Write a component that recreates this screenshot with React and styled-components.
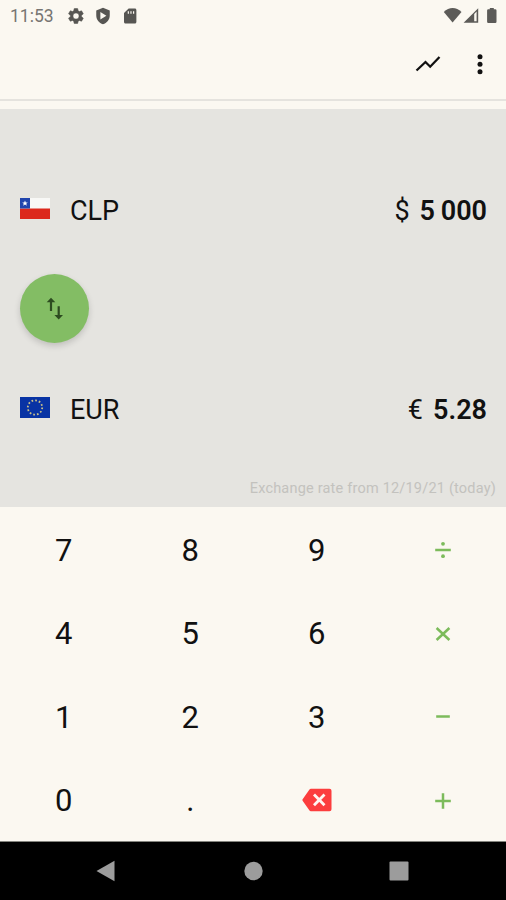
import styled, { createGlobalStyle } from 'styled-components';

const keys = ['7', '8', '9', 'divide', '4', '5', '6', 'multiply', '1', '2', '3', 'minus', '0', '.', 'delete', 'plus'];

const operators = {
    divide: <><path d="M4.2 12h15.600" /><circle cx="12" cy="5.800" r="1.900" /><circle cx="12" cy="18.200" r="1.900" /></>,
    multiply: <path d="M5.600 6l12.800 12M18.400 6l-12.800 12" />,
    minus: <path d="M5.200 11.500h13.600" />,
    plus: <path d="M4.200 12h15.600M12 4.200v15.600" />,
};

const StatusIcons = () => (
    <StatusGroup>
        <svg width="18" height="18" viewBox="0 0 24 24" fill="#575653" stroke="#575653" strokeWidth=".7">
            <path fillRule="evenodd" d="M19.4 13a7.500 7.500 0 0 0 0-2l2.100-1.600a.5.5 0 0 0 .1-.6l-2-3.500a.5.5 0 0 0-.6-.2l-2.500 1a7.300 7.300 0 0 0-1.700-1l-.4-2.600a.5.5 0 0 0-.5-.5h-4a.5.5 0 0 0-.5.5L9 5.100a7.300 7.300 0 0 0-1.700 1l-2.500-1a.5.5 0 0 0-.6.2l-2 3.500a.5.5 0 0 0 .1.6L4.500 11a7.500 7.500 0 0 0 0 2l-2.200 1.600a.5.5 0 0 0-.1.6l2 3.500c.1.2.4.3.6.2l2.500-1a7.300 7.300 0 0 0 1.700 1l.4 2.600c0 .3.2.5.5.5h4c.3 0 .5-.2.5-.5l.4-2.600a7.300 7.300 0 0 0 1.700-1l2.500 1c.2.1.5 0 .6-.2l2-3.500a.5.5 0 0 0-.1-.6zM12 7.900a4.100 4.100 0 1 1 0 8.200 4.100 4.100 0 0 1 0-8.200z" />
        </svg>
        <svg width="18" height="18" viewBox="0 0 24 24" fill="#575653">
            <path fillRule="evenodd" d="M12 1L3 4.500V11c0 6 3.800 10.500 9 12 5.200-1.500 9-6 9-12V4.500zM8.500 6.500l8 5-8 5z" />
        </svg>
        <svg width="18" height="18" viewBox="0 0 24 24" fill="#575653">
            <path fillRule="evenodd" d="M18.500 2h-8.300L4 8v12c0 1.100.9 2 2 2h12.500c1.100 0 2-.9 2-2V4c0-1.100-.9-2-2-2zM9 5.500h1.600V9H9zM12.500 5.500h1.600V9h-1.600zM16 5.500h1.600V9H16z" />
        </svg>
    </StatusGroup>
);

const App = () => (
    <Screen>
        <GlobalStyle />
        <StatusBar>
            <Clock>11:53</Clock>
            <StatusIcons />
            <SignalIcons width="56" height="18" viewBox="0 0 56 18" fill="#5c5b58">
                <path d="M1.800 5C7-.3 14.300-.3 19.500 5L10.600 15.600z" />
                <path fillRule="evenodd" d="M36.200 1.200V15.800H21.600zM32.200 6.900V14.300H34.600V4.600z" />
                <path d="M47.800 2.300V1h4v1.300h1.500a1.200 1.200 0 0 1 1.200 1.200v11.300a1.200 1.200 0 0 1-1.200 1.200h-7a1.200 1.200 0 0 1-1.200-1.200V3.500a1.200 1.200 0 0 1 1.200-1.200z" />
            </SignalIcons>
        </StatusBar>
        <Toolbar>
            <svg width="28" height="20" viewBox="0 0 28 20" fill="none" stroke="#111" strokeWidth="2.300">
                <path d="M2.500 16.500l9-8.500 4.700 4.700L25.500 3" />
            </svg>
            <svg width="8" height="24" viewBox="0 0 8 24" fill="#111">
                <circle cx="4" cy="4.800" r="2.500" /><circle cx="4" cy="12.300" r="2.500" /><circle cx="4" cy="19.800" r="2.500" />
            </svg>
        </Toolbar>
        <Converter>
            <CurrencyRow>
                <svg width="30" height="21" viewBox="0 0 30 21">
                    <path fill="#f8f8f6" d="M0 0h30v11H0z" />
                    <path fill="#dc281c" d="M0 10.500h30V21H0z" />
                    <path fill="#2145ad" d="M0 0h10v10.500H0z" />
                    <path fill="#fff" d="M5 2.400l.8 2h2L6.200 5.700l.7 2.100L5 6.500 3.100 7.800l.7-2.100-1.600-1.300h2z" />
                </svg>
                <Code>CLP</Code>
                <Sign>$</Sign>
                <Amount>5 000</Amount>
            </CurrencyRow>
            <SwapButton>
                <svg width="20" height="26" viewBox="0 0 20 26" fill="#2d4b20">
                    <path d="M6 1.800l4.300 4.500H7.100V15H4.900V6.300H1.700zM13.700 23.400l4.300-4.500h-3.200V10.300h-2.200v8.600H9.400z" />
                </svg>
            </SwapButton>
            <CurrencyRow>
                <svg width="30" height="21" viewBox="0 0 30 21">
                    <path fill="#0833a4" d="M0 0h30v21H0z" />
                    <circle cx="15" cy="10.500" r="7.200" fill="none" stroke="#c9c08a" strokeWidth="1.800" strokeDasharray="1.700 2.070" />
                </svg>
                <Code>EUR</Code>
                <Sign>€</Sign>
                <Amount>5.28</Amount>
            </CurrencyRow>
            <RateInfo>Exchange rate from 12/19/21 (today)</RateInfo>
        </Converter>
        <Keypad>
            {keys.map(key => (
                <Key key={key}>
                    {key === 'delete' && (
                        <DeleteIcon width="30" height="24" viewBox="0 0 30 24">
                            <path fill="#fc3d3e" d="M9 .8h18.500A2 2 0 0 1 29.500 2.800v18.400a2 2 0 0 1-2 2H9a2 2 0 0 1-1.700-.9L.8 13a1.600 1.600 0 0 1 0-2l6.500-9.300A2 2 0 0 1 9 .8z" />
                            <path stroke="#fff5f0" strokeWidth="2.800" d="M12 6.500l10.500 10.800M22.500 6.500L12 17.300" />
                        </DeleteIcon>
                    )}
                    {operators[key] && <OperatorIcon viewBox="0 0 24 24">{operators[key]}</OperatorIcon>}
                    {key.length === 1 && key}
                </Key>
            ))}
        </Keypad>
        <NavBar>
            <svg width="22" height="22" viewBox="0 0 22 22"><path d="M1.500 11L19.500.800v20.400z" /></svg>
            <svg width="22" height="22" viewBox="0 0 22 22"><circle cx="11.500" cy="11" r="9.200" /></svg>
            <svg width="22" height="22" viewBox="0 0 22 22"><rect x="1.500" y="1.500" width="19" height="19" rx="1" /></svg>
        </NavBar>
    </Screen>
);

export default App;

const GlobalStyle = createGlobalStyle`
    body {
        margin: 0;
    }
`;

const Screen = styled.div`
    display: flex;
    flex-direction: column;
    width: 506px;
    height: 900px;
    overflow: hidden;
    background: #fbf8f1;
    color: #111;
    font-family: Roboto, sans-serif;
`;

const StatusBar = styled.div`
    display: flex;
    align-items: center;
    height: 32px;
    padding: 0 8px 0 10px;
    box-sizing: border-box;
`;

const Clock = styled.div`
    width: 57px;
    font-size: 17.5px;
    color: #777572;
`;

const StatusGroup = styled.div`
    display: flex;
    gap: 9px;
`;

const SignalIcons = styled.svg`
    margin-left: auto;
`;

const Toolbar = styled.div`
    display: flex;
    align-items: center;
    justify-content: flex-end;
    gap: 34px;
    height: 69px;
    padding-right: 22px;
    padding-bottom: 4px;
    box-sizing: border-box;
    border-bottom: 2px solid #e5e3de;
`;

const Converter = styled.div`
    display: flex;
    flex-direction: column;
    height: 398px;
    margin-top: 8px;
    padding: 82px 19px 0 20px;
    box-sizing: border-box;
    background: #e5e4e0;
`;

const CurrencyRow = styled.div`
    display: flex;
    align-items: center;
    height: 40px;
    font-size: 27px;

    svg {
        margin-bottom: 5px;
    }
`;

const Code = styled.div`
    margin-left: 20px;
`;

const Sign = styled.div`
    margin-left: auto;
`;

const Amount = styled.div`
    margin-left: 10px;
    font-weight: 600;
    word-spacing: -1px;
`;

const SwapButton = styled.button`
    display: flex;
    align-items: center;
    justify-content: center;
    width: 69px;
    height: 69px;
    margin: 43px 0 47px;
    padding: 0;
    border: 0;
    border-radius: 50%;
    background: #83bd64;
    box-shadow: 0 3px 6px rgba(0, 0, 0, 0.16);
`;

const RateInfo = styled.div`
    margin: 49px -9px 0 0;
    font-size: 14.5px;
    line-height: 20px;
    letter-spacing: 0.2px;
    text-align: right;
    color: #c3c2be;
`;

const Keypad = styled.div`
    display: grid;
    grid-template-columns: repeat(4, 1fr);
    grid-template-rows: repeat(4, 83.5px);
    height: 334px;
    padding-top: 1.5px;
    box-sizing: border-box;
`;

const Key = styled.div`
    display: flex;
    align-items: center;
    justify-content: center;
    padding-left: 1px;
    font-size: 31px;
`;

const DeleteIcon = styled.svg`
    margin: 0 0 2px 1px;
`;

const OperatorIcon = styled.svg`
    width: 24px;
    height: 24px;
    fill: none;
    stroke: #7cbb5b;
    stroke-width: 2.5;

    circle {
        fill: #7cbb5b;
        stroke: none;
    }
`;

const NavBar = styled.div`
    display: flex;
    align-items: center;
    justify-content: space-between;
    flex: 1;
    padding: 0 96px 0 95px;
    border-top: 1px solid #84847e;
    background: #000;
    fill: #9c9c9c;
`;
